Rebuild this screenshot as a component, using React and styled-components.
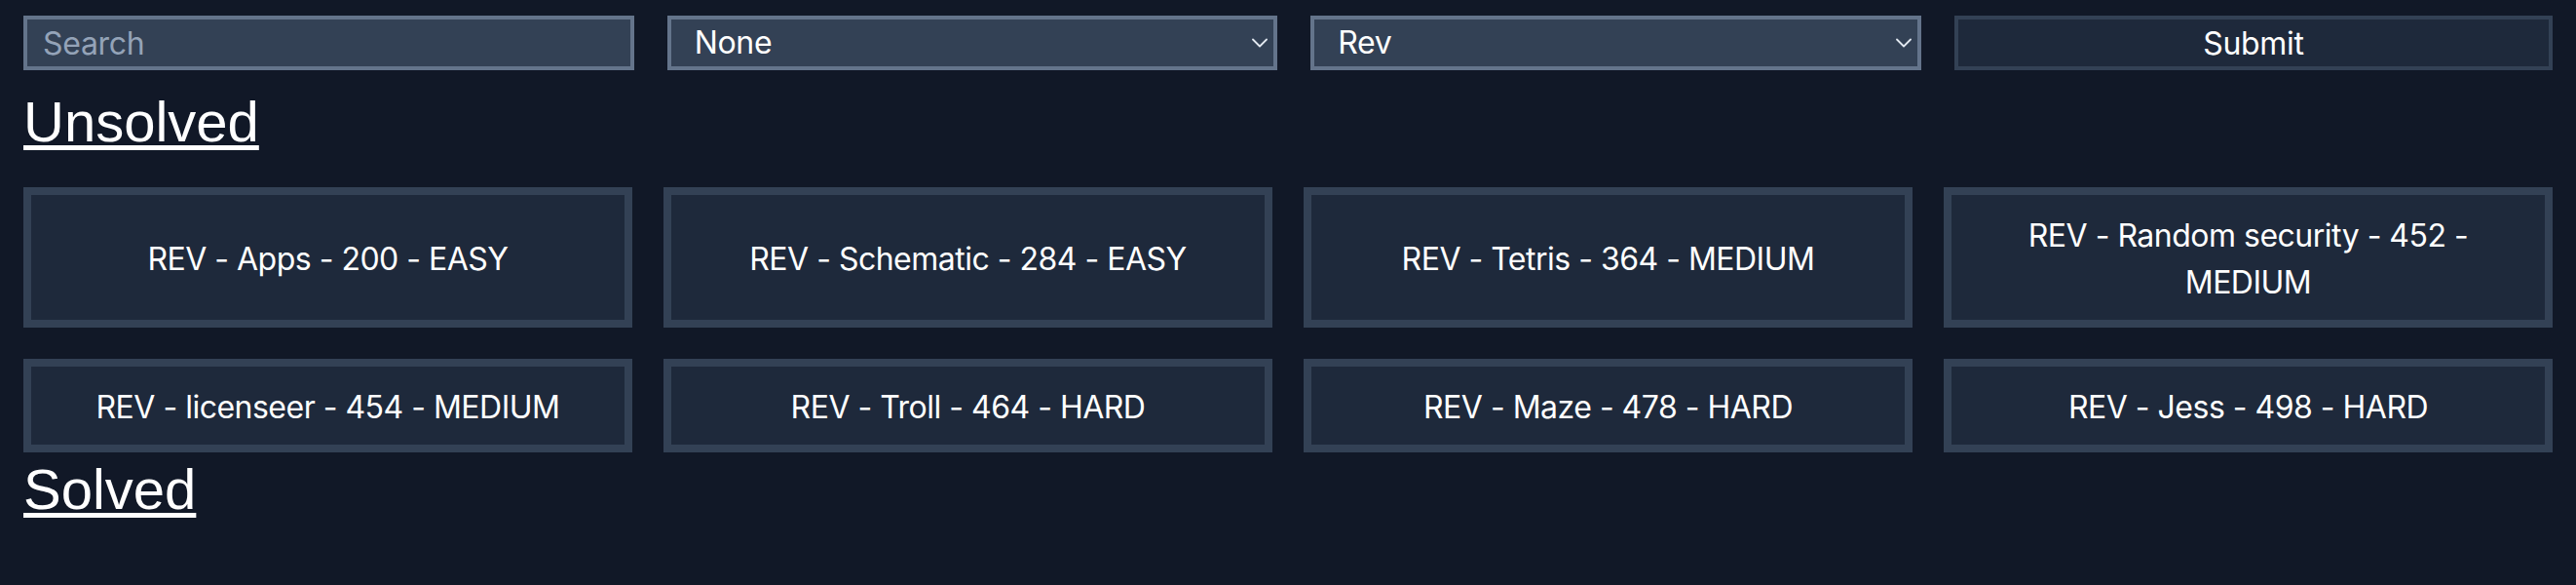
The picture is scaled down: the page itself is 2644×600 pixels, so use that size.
import React from "react";
import styled, { createGlobalStyle } from "styled-components";

const GlobalStyle = createGlobalStyle`
  html, body {
    margin: 0;
    padding: 0;
    background-color: #111827;
    min-height: 100vh;
  }
  * {
    box-sizing: border-box;
  }
`;

const challenges = [
  "REV - Apps - 200 - EASY",
  "REV - Schematic - 284 - EASY",
  "REV - Tetris - 364 - MEDIUM",
  "REV - Random security - 452 - MEDIUM",
  "REV - licenseer - 454 - MEDIUM",
  "REV - Troll - 464 - HARD",
  "REV - Maze - 478 - HARD",
  "REV - Jess - 498 - HARD",
];

const Chevron = () => (
  <ChevronIcon width="16" height="10" viewBox="0 0 16 10" fill="none">
    <path
      d="M1 1.5L8 8.5L15 1.5"
      stroke="#e2e8f0"
      strokeWidth="1.8"
      strokeLinecap="round"
      strokeLinejoin="round"
    />
  </ChevronIcon>
);

const App = () => {
  return (
    <Page>
      <GlobalStyle />
      <Toolbar>
        <SearchInput type="text" placeholder="Search" />
        <SelectWrap>
          <Select defaultValue="none">
            <option value="none">None</option>
            <option value="solved">Solved</option>
            <option value="unsolved">Unsolved</option>
          </Select>
          <Chevron />
        </SelectWrap>
        <SelectWrap>
          <Select defaultValue="rev">
            <option value="all">All</option>
            <option value="rev">Rev</option>
            <option value="pwn">Pwn</option>
            <option value="web">Web</option>
            <option value="crypto">Crypto</option>
          </Select>
          <Chevron />
        </SelectWrap>
        <SubmitButton type="button">Submit</SubmitButton>
      </Toolbar>

      <SectionTitle>Unsolved</SectionTitle>
      <ChallengeGrid>
        {challenges.map((name) => (
          <ChallengeCard key={name}>{name}</ChallengeCard>
        ))}
      </ChallengeGrid>

      <SectionTitle>Solved</SectionTitle>
    </Page>
  );
};

const Page = styled.div`
  padding: 16px 24px 24px;
  min-height: 100vh;
  background-color: #111827;
  font-family: Inter, "Noto Sans", sans-serif;
  color: #ffffff;
`;

const Toolbar = styled.div`
  display: grid;
  grid-template-columns: 1fr 1fr 1fr 0.98fr;
  column-gap: 34px;
  height: 56px;
  margin-bottom: 17px;
`;

const fieldBase = `
  height: 56px;
  width: 100%;
  margin: 0;
  border: 4px solid #64748b;
  border-radius: 0;
  background-color: #334155;
  color: #ffffff;
  font-family: Inter, "Noto Sans", sans-serif;
  font-size: 32px;
  line-height: 48px;
  letter-spacing: -0.3px;
  outline: none;
`;

const SearchInput = styled.input`
  ${fieldBase}
  padding: 0 16px;
  &::placeholder {
    color: #94a3b8;
  }
`;

const SelectWrap = styled.div`
  position: relative;
`;

const Select = styled.select`
  ${fieldBase}
  appearance: none;
  -webkit-appearance: none;
  padding: 0 48px 0 24px;
  cursor: pointer;
`;

const ChevronIcon = styled.svg`
  position: absolute;
  right: 10px;
  top: 50%;
  transform: translateY(-50%);
  pointer-events: none;
`;

const SubmitButton = styled.button`
  height: 56px;
  width: 100%;
  margin: 0;
  border: 4px solid #334155;
  border-radius: 0;
  background-color: #1e293b;
  color: #ffffff;
  font-family: Inter, "Noto Sans", sans-serif;
  font-size: 32px;
  line-height: 48px;
  letter-spacing: -0.3px;
  cursor: pointer;
`;

const SectionTitle = styled.h2`
  margin: 0;
  font-family: "Liberation Sans", Arial, sans-serif;
  font-size: 58px;
  font-weight: 400;
  line-height: 72px;
  color: #ffffff;
  text-decoration: underline;
  text-decoration-thickness: 5px;
  text-underline-offset: 4px;
`;

const ChallengeGrid = styled.div`
  display: grid;
  grid-template-columns: repeat(4, 1fr);
  gap: 32px;
  margin: 31px 0 2px;
`;

const ChallengeCard = styled.div`
  display: flex;
  align-items: center;
  justify-content: center;
  padding: 18px 32px 14px;
  border: 8px solid #334155;
  background-color: #1e293b;
  color: #ffffff;
  font-size: 32px;
  line-height: 48px;
  letter-spacing: -0.5px;
  text-align: center;
  cursor: pointer;
`;

export default App;
